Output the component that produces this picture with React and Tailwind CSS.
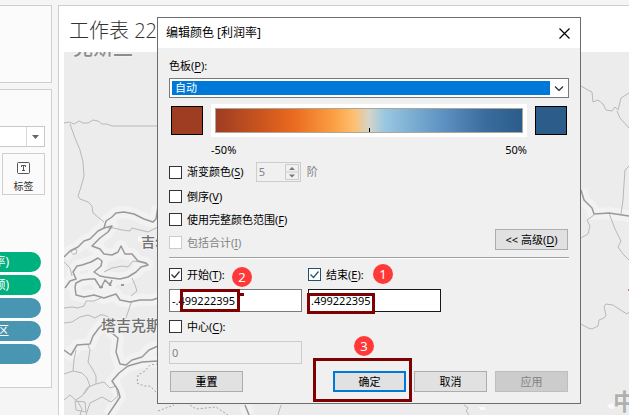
import React from "react";

const thinLines = [
  "M64 123 L69 122 L74 124 L79 121 L83 123 L88 123 L93 120 L98 121 L102 124 L107 124 L112 126 L158 126",
  "M70 124 L75 138 L80 150 L83 162 L84 176 L81 187 L78 196 L80 199 L88 202 L92 206 L93 213 L99 218 L104 222",
  "M108 228 L114 228 L122 230 L130 231 L132 228 L140 230 L148 232 L158 227",
  "M64 308 L72 307 L78 308 L84 306 L86 301 L94 301 L101 298",
  "M64 323 L72 322 L80 317 L88 315 L95 318 L100 315 L104 315 L110 318 L118 321 L126 318 L130 306 L132 301",
  "M88 345 L90 350 L88 362 L93 370 L96 376 L96 384 L88 387 L82 396 L76 400",
  "M76 350 L74 360 L73 371 L64 374",
  "M73 371 L82 373 L87 378 L90 386 L84 394",
  "M64 400 L70 395 L78 402 L82 409 L80 415",
  "M96 384 L104 382 L110 388 L116 386 L118 396 L111 402 L102 397 L90 403 L86 415",
  "M75 401 L85 402 L86 412 L76 410 Z",
  "M64 262 L70 268 L72 276 M71 253 L73 249 L77 250 L76 254 L72 254",
  "M104 272 L112 268 L122 266 L128 267 L133 261 L140 262 L147 264",
  "M132 278 L135 285 L137 291 L131 296",
  "M581 86 L588 90 L592 92 L593 102 L598 100 L603 104 L606 110 L612 111 L615 107 L618 110 L621 98 L629 93",
  "M617 111 L620 118 L629 128",
  "M629 166 L625 170 L624 184 L623 200 L621 214",
  "M609 213 L615 229 L621 241 L618 247 L623 254 L629 260",
  "M594 215 L587 220 L590 226 L588 234 L581 238",
  "M581 324 L588 328 L592 329 L598 326 L599 320 L604 318 L606 316 L604 306 L606 304 L613 305 L622 311 L627 314 L629 312",
  "M464 405 L468 408 L466 411 L469 415",
  "M281 405 L278 415",
];

const thickLines = [
  "M64 257 L70 251 L78 247 L84 241 L90 239 L98 231 L104 228 L106 221 L112 217 L116 213 L124 212 L134 214 L144 219 L153 222 L156 219 L158 206",
  "M104 228 L112 226 L108 232 L100 238 L92 246 L100 249 L104 254 L112 255 L118 252 L121 246 L125 254 L132 254 L138 261 L146 263 L148 265 L141 267 L136 272 L128 277 L120 279 L112 278 L105 277 L100 276 L94 272 L101 266 L102 261 L98 258 L91 262 L82 265 L77 266 L73 272 L76 279 L70 281 L65 288",
  "M75 287 L76 283 L82 280 L90 279 L95 279 L98 284 L101 288 L105 280 L110 285 L112 280",
  "M75 287 L76 295 L84 297 L94 295 L104 298 L116 294 L120 300 L130 302 L140 300 L152 300 L158 298",
  "M64 350 L71 355 L77 345 L90 344 L93 336 L99 328 L104 323 L112 333 L118 338 L116 352 L120 364 L126 365 L132 360 L142 357 L149 350 L158 346",
  "M158 361 L142 362 L128 366 L119 373 L112 381 L118 390 L120 397 L114 406 L108 415",
  "M245 405 L249 415",
  "M581 190 L584 200 L592 208 L594 214 L609 213 L629 216",
];

function WorldMap() {
  return (
    <svg
      className="h-[363px] w-full bg-[#ececec]"
      viewBox="64 52 565 363"
      preserveAspectRatio="xMinYMin slice"
      role="img"
      aria-label="地图"
    >
      <g fill="none" stroke="#f2f2f2" strokeWidth="12" strokeLinejoin="round">
        {thickLines.map((d) => <path key={d} d={d} />)}
      </g>
      <g fill="none" stroke="#b8b8b8" strokeLinejoin="round">
        {thinLines.map((d) => <path key={d} d={d} />)}
      </g>
      <g fill="none" stroke="#999999" strokeWidth="1.5" strokeLinejoin="round">
        {thickLines.map((d) => <path key={d} d={d} />)}
      </g>
      <path
        d="M158 364 L150 365 L145 371 L138 375 L137 383 L144 386 L150 386 L158 394 M158 411 L174 405 M190 405 L196 409 L216 407 L228 415"
        fill="none"
        stroke="#a3a3a3"
        strokeDasharray="2 2"
      />
      <path d="M99 286h4v2h-4z M109 282l3 4h-3z M121 284h3v2h-3z" fill="#999999" />
      <path d="M138 236l4 2v5l-4-2z M607 405l6-2 1 6-5-1z M478 407h7v3h-4z" fill="#fafafa" />
      <path d="M629 289v2h-1v-2z" fill="#e57368" />
      <g className="font-['Noto_Sans_CJK_SC',sans-serif]" fill="#707070" fontWeight="500" stroke="#f2f2f2" strokeWidth="2" paintOrder="stroke">
        <text x="73" y="55" fontSize="20" fill="#8c8c8c">克斯兰</text>
        <text x="141" y="247" fontSize="14">吉尔</text>
        <text x="101" y="331" fontSize="15">塔吉克斯坦</text>
        <text x="613" y="410" fontSize="23" fontWeight="700" fill="#b0b0b0">中国</text>
      </g>
    </svg>
  );
}

function Pill({ text, color }) {
  return (
    <div className={`flex h-5 w-[41px] items-center justify-end rounded-r-full pr-8 text-xs whitespace-nowrap text-white ${color}`}>
      {text}
    </div>
  );
}

function Sidebar() {
  return (
    <aside className="flex w-[52px] shrink-0 flex-col gap-1.5 overflow-hidden pt-[5px]">
      <section className="h-[78px] border-y border-r border-[#cfcfcf] bg-[#fbfbfb]" />
      <section className="h-[299px] border-y border-r border-[#cfcfcf] bg-[#fbfbfb] pt-9">
        <button aria-label="标记类型" className="flex h-[21px] w-[45px] justify-end border-y border-r border-[#c8c8c8] bg-white">
          <span className="flex h-full w-[18px] items-center justify-center border-l border-[#d8d8d8]">
            <svg className="h-1 w-[7px]" viewBox="0 0 7 4"><path d="M0 0h7L3.5 4z" fill="#666666" /></svg>
          </span>
        </button>
        <button className="mt-1.5 ml-0.5 flex h-[42px] w-[43px] flex-col items-center gap-1 border border-[#cfcfcf] bg-[#fbfbfb] pt-2 text-[10px] leading-4 text-[#333333]">
          <svg className="h-3 w-[13px] shrink-0" viewBox="0 0 13 12" fill="none" stroke="#555555">
            <rect x="0.5" y="0.5" width="12" height="11" rx="1" />
            <path d="M4.5 5V3.5h4V5M6.5 3.5v5M5 8.5h3" />
          </svg>
          标签
        </button>
        <div className="mt-[57px] flex flex-col gap-[3px]">
          <Pill text="率)" color="bg-[#00b180]" />
          <Pill text="额)" color="bg-[#00b180]" />
          <Pill text="" color="bg-[#4996b2]" />
          <Pill text="区" color="bg-[#4996b2]" />
          <Pill text="" color="bg-[#4996b2]" />
        </div>
      </section>
    </aside>
  );
}

function Check({ label, hotkey, suffix = "", checked = false, disabled = false, blue = false }) {
  const edge = disabled ? "border-[#cccccc]" : blue ? "border-[#26506e]" : "border-[#333333]";
  return (
    <label className={`flex h-[23px] items-center gap-[5px] ${disabled ? "text-[#838383]" : ""}`}>
      <span className="grid">
        <input
          type="checkbox"
          defaultChecked={checked}
          disabled={disabled}
          className={`peer col-start-1 row-start-1 size-[13px] appearance-none border bg-white ${edge}`}
        />
        <svg
          className="pointer-events-none invisible col-start-1 row-start-1 size-[13px] peer-checked:visible"
          viewBox="0 0 13 13"
          fill="none"
          stroke={blue ? "#26506e" : "#333333"}
          strokeWidth="1.2"
        >
          <path d="M2.5 6.5l3 3 5-6" />
        </svg>
      </span>
      <span>{label}(<u className="underline-offset-2">{hotkey}</u>){suffix}</span>
    </label>
  );
}

const buttonBase = "h-[21px] w-[73px] text-center leading-none";

function Badge({ n, place }) {
  return (
    <span className={`absolute flex size-5 items-center justify-center rounded-full bg-[#ff3838] text-[13px] leading-none text-white ${place}`}>
      {n}
    </span>
  );
}

function ColorDialog() {
  return (
    <div
      role="dialog"
      aria-label="编辑颜色 [利润率]"
      className="absolute top-[17px] left-[157px] w-[424px] border border-[#6d6d6d] bg-[#f0f0f0] text-[11px] leading-4 text-black"
    >
      <header className="flex h-[30px] items-center justify-between bg-white pr-2.5 pl-2 text-xs">
        <h2>编辑颜色 [利润率]</h2>
        <button aria-label="关闭">
          <svg className="size-[11px]" viewBox="0 0 11 11" stroke="#000000" strokeWidth="1.2"><path d="M0.5 0.5l10 10M10.5 0.5l-10 10" /></svg>
        </button>
      </header>

      <div className="px-[11px] pt-[9px] pb-[11px]">
        <label htmlFor="palette" className="flex h-[18px] items-center">色板(<u className="underline-offset-2">P</u>):</label>
        <div className="mt-[3px] flex h-5 items-center border border-[#7a7a7a] bg-white py-0.5 pl-0.5">
          <select id="palette" className="h-3.5 flex-1 appearance-none bg-[#0078d7] pl-[3px] leading-[14px] text-white">
            <option>自动</option>
          </select>
          <svg className="h-[5px] w-[18px]" viewBox="0 0 18 5" fill="none" stroke="#333333" strokeWidth="1.3"><path d="M5 0.5l4 4 4-4" /></svg>
        </div>

        <div className="mt-1.5 flex items-center gap-2 px-0.5">
          <button aria-label="起始颜色" className="h-[29px] w-8 border border-black bg-[#9e3d22]" />
          <div className="h-[33px] flex-1 bg-white p-1">
            <div className="flex h-full items-end justify-center border border-[#aaa698] bg-[linear-gradient(to_right,#9e3d22_0%,#c9531f_14%,#e9691f_25%,#fb9d40_38%,#fdbf6f_45%,#d6d4c9_50%,#98c8e2_55%,#6195c4_73%,#3a6c9f_88%,#2b5c8a_100%)]">
              <span className="h-1 w-px bg-black" />
            </div>
          </div>
          <button aria-label="结束颜色" className="h-[29px] w-8 border border-black bg-[#2b5c8a]" />
        </div>
        <div className="flex h-[25px] items-center justify-between px-[42px]">
          <span>-50%</span>
          <span>50%</span>
        </div>

        <div className="flex items-end justify-between">
          <div>
            <div className="mb-[3px] flex h-5 items-center">
              <Check label="渐变颜色" hotkey="S" />
              <div className="ml-3 flex h-5 w-[45px] border border-[#cccccc] p-px">
                <input aria-label="阶数" disabled defaultValue="5" className="w-full min-w-0 pl-px text-[#838383]" />
                <svg className="h-4 w-3.5 shrink-0" viewBox="0 0 14 16">
                  <path d="M0.5 0.5h13v15h-13zM0.5 8h13" fill="none" stroke="#cccccc" />
                  <path d="M4 6h6L7 3zM4 10.5h6l-3 3z" fill="#777777" />
                </svg>
              </div>
              <span className="ml-1.5 text-[#838383]">阶</span>
            </div>
            <Check label="倒序" hotkey="V" />
            <Check label="使用完整颜色范围" hotkey="F" />
            <Check label="包括合计" hotkey="I" disabled />
          </div>
          <button className={`mr-px mb-1 border border-[#adadad] bg-[#e1e1e1] ${buttonBase}`}>
            &lt;&lt; 高级(<u className="underline-offset-2">D</u>)
          </button>
        </div>

        <hr className="mt-[3px] h-0.5 border-t border-b border-t-[#a0a0a0] border-b-white" />

        <div className="mt-1 grid grid-cols-[133px_133px] gap-x-1.5 gap-y-[3px]">
          <Check label="开始" hotkey="T" suffix=":" checked />
          <Check label="结束" hotkey="E" suffix=":" checked blue />
          <input aria-label="开始值" defaultValue="-.499222395" className="h-[23px] border border-[#7a7a7a] bg-white px-0.5" />
          <input aria-label="结束值" defaultValue=".499222395" className="h-[23px] border border-[#171717] bg-white px-0.5" />
          <Check label="中心" hotkey="C" suffix=":" />
          <input aria-label="中心值" disabled defaultValue="0" className="col-start-1 h-[23px] border border-[#cccccc] px-0.5 text-[#838383]" />
        </div>

        <footer className="mt-[7px] flex gap-2 px-px">
          <button className={`mr-auto border border-[#adadad] bg-[#e1e1e1] font-medium ${buttonBase}`}>重置</button>
          <button className={`border-2 border-[#0078d7] bg-[#e1e1e1] ${buttonBase}`}>确定</button>
          <button className={`border border-[#adadad] bg-[#e1e1e1] ${buttonBase}`}>取消</button>
          <button disabled className={`border border-[#bfbfbf] bg-[#cccccc] text-[#838383] ${buttonBase}`}>应用</button>
        </footer>
      </div>

      <div className="pointer-events-none">
        <div className="absolute top-[271px] left-[22px] h-[23px] w-[60px] border-3 border-[#7f0000]" />
        <div className="absolute top-[275px] left-[82px] h-[3px] w-1 bg-[#7f0000]" />
        <div className="absolute top-[275px] left-[149px] h-[21px] w-[68px] border-3 border-[#7f0000]" />
        <div className="absolute top-[340px] left-[155px] h-11 w-[99px] border-3 border-[#7f0000]" />
        <Badge n="1" place="top-[246px] left-[215px]" />
        <Badge n="2" place="top-[249px] left-[74px]" />
        <Badge n="3" place="top-[318px] left-[196px]" />
      </div>
    </div>
  );
}

export default function App() {
  return (
    <div className="relative flex h-screen gap-1.5 overflow-hidden bg-[#f5f5f5] font-['Noto_Sans','Noto_Sans_CJK_SC',sans-serif]">
      <Sidebar />
      <main className="mt-[5px] min-w-0 flex-1 border-t border-l border-[#cfcfcf] bg-white pl-[5px]">
        <h1 className="flex h-[46px] items-center pt-1 pl-[5px] font-['Open_Sans','Noto_Sans_CJK_SC_Light','Noto_Sans_CJK_SC',sans-serif] text-xl leading-6 font-light text-[#333333]">
          工作表 22
        </h1>
        <WorldMap />
      </main>
      <ColorDialog />
    </div>
  );
}
